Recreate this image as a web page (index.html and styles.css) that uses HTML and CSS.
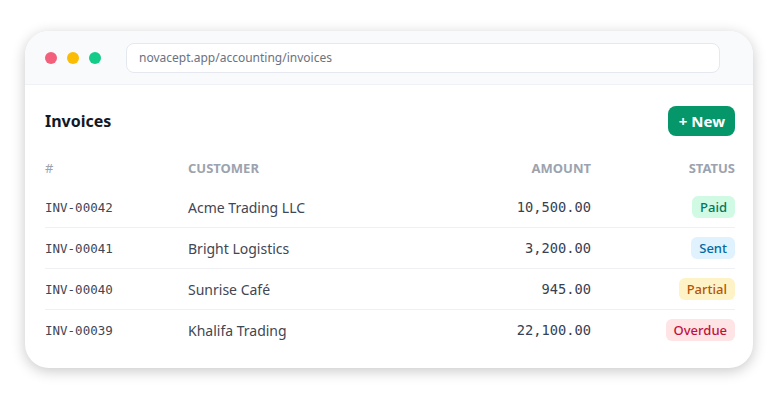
FILE: index.html
```html
<!DOCTYPE html>
<html lang="en">
  <head>
    <meta charset="utf-8">
    <title>Invoices</title>
    <link rel="stylesheet" href="styles.css">
  </head>
  <body>
    <div class="window">
      <div class="titlebar">
        <div class="dots">
          <span class="dot dot-red"></span>
          <span class="dot dot-yellow"></span>
          <span class="dot dot-green"></span>
        </div>
        <div class="url">novacept.app/accounting/invoices</div>
      </div>
      <div class="content">
        <div class="head">
          <h1>Invoices</h1>
          <a class="btn-new">+ New</a>
        </div>
        <table class="invoices">
          <colgroup>
            <col class="c-num">
            <col>
            <col class="c-amount">
            <col class="c-status">
          </colgroup>
          <thead>
            <tr>
              <th class="hash">#</th>
              <th>Customer</th>
              <th class="right">Amount</th>
              <th class="right">Status</th>
            </tr>
          </thead>
          <tbody>
            <tr>
              <td class="mono">INV-00042</td>
              <td>Acme Trading LLC</td>
              <td class="mono amount">10,500.00</td>
              <td class="right"><span class="badge paid">Paid</span></td>
            </tr>
            <tr>
              <td class="mono">INV-00041</td>
              <td>Bright Logistics</td>
              <td class="mono amount">3,200.00</td>
              <td class="right"><span class="badge sent">Sent</span></td>
            </tr>
            <tr>
              <td class="mono">INV-00040</td>
              <td>Sunrise Café</td>
              <td class="mono amount">945.00</td>
              <td class="right"><span class="badge partial">Partial</span></td>
            </tr>
            <tr>
              <td class="mono">INV-00039</td>
              <td>Khalifa Trading</td>
              <td class="mono amount">22,100.00</td>
              <td class="right"><span class="badge overdue">Overdue</span></td>
            </tr>
          </tbody>
        </table>
      </div>
    </div>
  </body>
</html>
```

FILE: styles.css
```css
body{
  margin:0;
  padding:31px 25px;
  background:#fff;
  font-family:"Noto Sans","Open Sans",sans-serif;
}
/*window frame*/
.window{
  background:#fff;
  border-radius:24px;
  box-shadow:0 3px 14px rgba(0,0,0,0.22);
  overflow:hidden;
}
.titlebar{
  height:54px;
  box-sizing:border-box;
  display:flex;
  align-items:center;
  gap:25px;
  padding:0 33px 0 20px;
  background:#f8fafc;
  border-bottom:1px solid #eef1f5;
}
.dots{
  display:flex;
  gap:10px;
}
.dot{
  width:12px;
  height:12px;
  border-radius:50%;
}
.dot-red{background:#f2607b;}
.dot-yellow{background:#fbbc05;}
.dot-green{background:#14cc8a;}
.url{
  flex:1;
  height:30px;
  box-sizing:border-box;
  display:flex;
  align-items:center;
  padding:0 12px;
  background:#fff;
  border:1px solid #e5e8ee;
  border-radius:8px;
  font-size:12px;
  color:#6b7280;
}
/*page content*/
.content{
  padding:21px 18px 18px 20px;
}
.head{
  display:flex;
  justify-content:space-between;
  align-items:center;
}
.head h1{
  margin:0;
  font-size:16px;
  font-weight:700;
  color:#111827;
}
.btn-new{
  height:30px;
  display:flex;
  align-items:center;
  padding:0 10px 0 11px;
  background:#059669;
  color:#fff;
  border-radius:8px;
  font-size:15px;
  font-weight:700;
}
.invoices{
  width:100%;
  margin-top:13px;
  border-collapse:collapse;
  table-layout:fixed;
}
.c-num{width:143px;}
.c-amount{width:150px;}
.c-status{width:144px;}
.invoices th{
  padding:10px 0;
  line-height:18px;
  text-align:left;
  font-size:13px;
  font-weight:700;
  color:#9ca3af;
  text-transform:uppercase;
}
.invoices th.hash{font-weight:400;}
.invoices td{
  height:40px;
  padding:0;
  font-size:14px;
  color:#3f4654;
  border-bottom:1px solid #eef0f3;
}
.invoices tbody tr:last-child td{border-bottom:none;}
.right{text-align:right !important;}
.mono{
  font-family:"DejaVu Sans Mono",monospace;
  font-size:12.5px !important;
  color:#3f4654;
}
.amount{
  text-align:right;
  font-size:13.7px !important;
  color:#374151 !important;
}
/*status badges*/
.badge{
  display:inline-block;
  padding:0 8px;
  line-height:22px;
  border-radius:6px;
  font-size:13px;
  font-weight:500;
}
.paid{background:#d1fae5;color:#047857;}
.sent{background:#e0f2fe;color:#0369a1;}
.partial{background:#fef3c7;color:#b45309;}
.overdue{background:#ffe4e6;color:#be123c;}
```
